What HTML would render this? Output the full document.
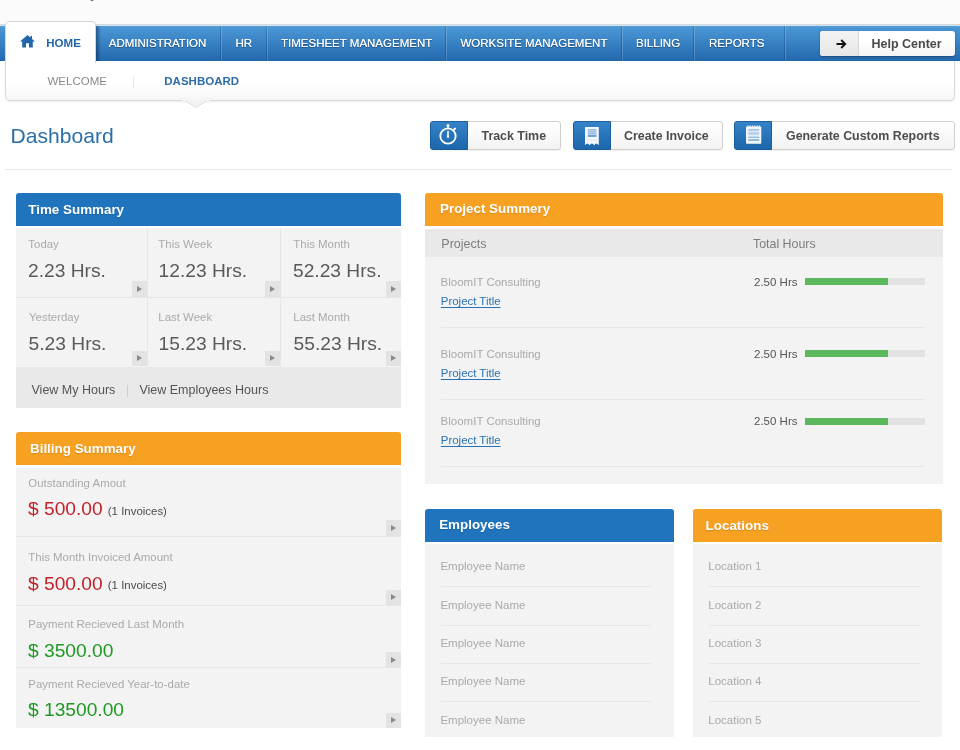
<!DOCTYPE html>
<html>
<head>
<meta charset="utf-8">
<title>Dashboard</title>
<style>
*{box-sizing:border-box;margin:0;padding:0}
html,body{width:960px;height:750px;overflow:hidden;background:#fff;font-family:"Liberation Sans",sans-serif;}
body{position:relative;color:#555;will-change:transform}
.abs{position:absolute}
.t{position:absolute;white-space:nowrap;line-height:1}
/* top strip */
#topbg{left:0;top:0;width:960px;height:26px;background:#fbfbfb}
/* nav */
#nav{left:0;top:24px;width:960px;height:37.2px;border-top:1px solid #d5d9dc;background:linear-gradient(#cde3f6 0,#cde3f6 1.1px,#5d9dd4 1.2px,#4a95d3 3px,#3a84c6 45%,#2268ad 100%);}
.nsep{position:absolute;top:26px;width:2px;height:35px;border-left:1px solid rgba(10,50,100,.28);border-right:1px solid rgba(255,255,255,.18)}
.nt{position:absolute;white-space:nowrap;line-height:1;top:37.6px;font-size:11.5px;color:#fff;text-shadow:0 1px 1px rgba(0,0,0,.4),0 0 .4px #fff}
#hometab{left:5px;top:21px;width:91px;height:42px;background:#fff;border:1px solid #d6d6d6;border-bottom:none;border-radius:5px 5px 0 0}
#tabsh{left:96px;top:26px;width:5px;height:35px;background:linear-gradient(90deg,rgba(0,20,60,.45),rgba(0,20,60,0))}
#subnav{left:5px;top:61.2px;width:950px;height:39.6px;background:linear-gradient(#fff 60%,#f6f6f6 100%);border:1px solid #d9d9d9;border-top:none;border-radius:0 0 5px 5px;box-shadow:0 1px 2px rgba(0,0,0,.08)}
/* buttons */
.btn{position:absolute;top:121.2px;height:28.6px;border:1px solid #cfcfcf;border-radius:3px;background:linear-gradient(#fff,#f3f3f3);box-shadow:0 1px 1px rgba(0,0,0,.06)}
.btn .ic{position:absolute;left:-1px;top:-1px;width:38px;height:28.6px;border-radius:3px 0 0 3px;background:linear-gradient(#3583c6,#1c66ab);border:1px solid #1b5f9f}
.bt{position:absolute;white-space:nowrap;line-height:1;top:129.6px;font-size:12.4px;font-weight:bold;color:#4d4d4d}
/* panels */
.hd{position:absolute;height:33.1px;border-radius:3px 3px 0 0}
.blue{background:#1f74bd}
.orange{background:#f7a123}
.ht{position:absolute;white-space:nowrap;line-height:1;font-size:13.4px;font-weight:bold;color:#fff;text-shadow:0 1px 1px rgba(0,0,0,.15)}
.cell{position:absolute;background:#f3f3f3}
.lbl{position:absolute;white-space:nowrap;line-height:1;font-size:11.45px;color:#aaa}
.big{position:absolute;white-space:nowrap;line-height:1;font-size:19.2px;color:#5a5a5a}
.arr{position:absolute;width:15px;height:15.5px;background:#e3e3e3}
.arr:after{content:"";position:absolute;left:5.3px;top:4.6px;border-left:5px solid #8a8a8a;border-top:3.1px solid transparent;border-bottom:3.1px solid transparent}
.ln{position:absolute;height:1px;background:#e6e6e6}
.vl{position:absolute;width:1px;background:#e6e6e6}
.red{color:#c0222a}
.green{color:#1d9a22}
.sm{position:absolute;white-space:nowrap;line-height:1;font-size:11.45px;color:#4a4a4a}
.row{position:absolute;white-space:nowrap;line-height:1;font-size:11.5px;color:#aaa}
.lnk{position:absolute;white-space:nowrap;line-height:1;font-size:11.45px;color:#2a72b5;text-decoration:underline;text-underline-offset:2.1px;text-decoration-skip-ink:none;text-decoration-thickness:1px}
.hrs{position:absolute;white-space:nowrap;line-height:1;font-size:11.5px;color:#555}
.pb{position:absolute;left:805.3px;width:120px;height:7px;background:#e2e2e2}
.pb i{display:block;width:82.5px;height:7px;background:#5cb85c}
</style>
</head>
<body>
<div class="abs" id="topbg"></div>
<div class="abs" style="left:90.4px;top:-1px;width:4px;height:2.2px;border-radius:0 0 2px 2px;background:#666"></div>
<div class="abs" id="nav"></div>

<div class="nsep" style="left:219.8px"></div>
<div class="nsep" style="left:265.8px"></div>
<div class="nsep" style="left:444.8px"></div>
<div class="nsep" style="left:620.8px"></div>
<div class="nsep" style="left:692.8px"></div>
<div class="nsep" style="left:783.8px"></div>
<div class="abs" id="subnav"></div>
<div class="abs" id="tabsh"></div>
<div class="abs" id="hometab"></div>
<svg class="abs" style="left:20px;top:35.2px" width="15" height="13" viewBox="0 0 15 13"><path d="M7.5 0 L0 6.6 H2.2 V12.6 H6 V8.2 H9 V12.6 H12.8 V6.6 H15 L12 3.9 V1 H10.4 V2.5 Z" fill="#2166ab"/></svg>
<div class="t" style="left:46.3px;top:38px;font-size:11.5px;font-weight:bold;color:#2166ab">HOME</div>
<div class="nt" style="left:108.8px">ADMINISTRATION</div>
<div class="nt" style="left:235.4px">HR</div>
<div class="nt" style="left:281px">TIMESHEET MANAGEMENT</div>
<div class="nt" style="left:460.5px">WORKSITE MANAGEMENT</div>
<div class="nt" style="left:636px">BILLING</div>
<div class="nt" style="left:709px">REPORTS</div>
<!-- help center -->
<div class="abs" style="left:820px;top:31px;width:135px;height:24.5px;border-radius:3px;background:linear-gradient(#fff 40%,#f4f4f4);box-shadow:0 1px 2px rgba(0,0,0,.35)"></div>
<div class="abs" style="left:820px;top:31px;width:38.5px;height:24.5px;border-radius:3px 0 0 3px;background:linear-gradient(#f3f3f3,#e6e6e6);border-right:1px solid #d6d6d6"></div>
<svg class="abs" style="left:835.5px;top:38.8px" width="11" height="10" viewBox="0 0 11 10"><path d="M0.5 5 H9 M5.2 1 L9.2 5 L5.2 9" stroke="#111" stroke-width="1.9" fill="none"/></svg>
<div class="t" style="left:871.5px;top:37.6px;font-size:12.5px;font-weight:bold;color:#4a4a4a">Help Center</div>
<!-- subnav text -->
<div class="t" style="left:47.5px;top:75.8px;font-size:11.5px;color:#8a8a8a">WELCOME</div>
<div class="abs" style="left:133px;top:76.5px;width:1px;height:11px;background:#e6e6e6"></div>
<div class="t" style="left:164.3px;top:75.8px;font-size:11.5px;font-weight:bold;color:#2d6ca6">DASHBOARD</div>
<!-- pointer -->
<svg class="abs" style="left:182px;top:100px" width="28" height="9" viewBox="0 0 28 9"><path d="M2.3 0 L14 7.4 L25.7 0 Z" fill="#f3f3f3" stroke="#dedede" stroke-width="1"/><rect x="0" y="0" width="28" height="1" fill="#f4f4f4"/></svg>
<!-- title -->
<div class="t" style="left:10.5px;top:124.7px;font-size:21.1px;color:#2a6ea8">Dashboard</div>
<div class="ln" style="left:5px;top:168.8px;width:947px;background:#e9e9e9"></div>


<div class="btn" style="left:429.5px;width:131px"><div class="ic"></div></div>
<div class="btn" style="left:572.5px;width:150px"><div class="ic"></div></div>
<div class="btn" style="left:734px;width:220.5px"><div class="ic"></div></div>
<svg class="abs" style="left:438.25px;top:122.5px" width="20" height="24" viewBox="0 0 20 24"><circle cx="10" cy="13" r="7.7" fill="none" stroke="#fff" stroke-width="1.8"/><rect x="8.6" y="1.3" width="2.8" height="2.5" rx="0.7" fill="#fff"/><rect x="9.35" y="3" width="1.3" height="2" fill="#fff"/><path d="M16.3 6.3 L17 5.7" stroke="#fff" stroke-width="2.1" stroke-linecap="round"/><path d="M10 7.4 L10.8 8.4 L10.8 12.6 L11.3 13.6 L10 15.6 L8.7 13.6 L9.2 12.6 L9.2 8.4 Z" fill="#fff"/></svg>
<svg class="abs" style="left:585.2px;top:126.75px" width="14" height="19" viewBox="0 0 14 19"><path d="M0 0 H13.8 V18.3 L12.6 17 Q11.5 16 10.4 17 L9.2 18.3 L8 17 Q6.9 16 5.8 17 L4.6 18.3 L3.4 17 Q2.3 16 1.2 17 L0 18.3 Z" fill="#f2f7fd"/><path d="M2.8 2.9 H11.5 M2.8 4.9 H11.5 M2.8 6.9 H11.5" stroke="#7fa9d6" stroke-width="1.2"/><path d="M2.8 9 H11.5" stroke="#4c86c2" stroke-width="1.5"/><path d="M2 13 H12" stroke="#c4d6ea" stroke-width="0.9" stroke-dasharray="1.2 0.8"/></svg>
<svg class="abs" style="left:745.8px;top:125.3px" width="16" height="19" viewBox="0 0 16 19"><rect x="0" y="1.6" width="15.3" height="17.1" rx="0.8" fill="#f2f7fd"/><path d="M1.9 0.4 V3 M4.2 0.4 V3 M6.5 0.4 V3 M8.8 0.4 V3 M11.1 0.4 V3 M13.4 0.4 V3" stroke="#f2f7fd" stroke-width="1.2"/><path d="M2.2 4.9 H13.2" stroke="#6d9fd2" stroke-width="1"/><rect x="2.2" y="6.4" width="11" height="4" fill="#c9dcf0"/><path d="M2.2 8.4 H13.2" stroke="#a8c5e6" stroke-width="0.9"/><path d="M2.2 12.2 H13.2" stroke="#6d9fd2" stroke-width="1"/><path d="M2.2 15 H13.2" stroke="#5a8fc8" stroke-width="1.2"/></svg>
<div class="bt" style="left:481.5px">Track Time</div>
<div class="bt" style="left:624px">Create Invoice</div>
<div class="bt" style="left:786px">Generate Custom Reports</div>


<!-- Time Summary -->
<div class="hd blue" style="left:16.3px;top:193px;width:384.7px"></div>
<div class="ht" style="left:28.3px;top:203px">Time Summary</div>
<div class="cell" style="left:16.3px;top:228.4px;width:384.7px;height:138.5px;background:linear-gradient(#f8f8f8,#f3f3f3 2.5px)"></div>
<div class="vl" style="left:147.2px;top:228.3px;height:138.6px"></div>
<div class="vl" style="left:280.4px;top:228.3px;height:138.6px"></div>
<div class="ln" style="left:16.3px;top:297px;width:384.7px"></div>
<div class="lbl" style="left:28.3px;top:239.3px">Today</div>
<div class="lbl" style="left:158.3px;top:239.3px">This Week</div>
<div class="lbl" style="left:293.3px;top:239.3px">This Month</div>
<div class="big" style="left:28px;top:261px">2.23 Hrs.</div>
<div class="big" style="left:158.6px;top:261px">12.23 Hrs.</div>
<div class="big" style="left:293px;top:261px">52.23 Hrs.</div>
<div class="arr" style="left:132px;top:281.3px"></div>
<div class="arr" style="left:265.2px;top:281.3px"></div>
<div class="arr" style="left:386px;top:281.3px"></div>
<div class="lbl" style="left:29px;top:312.3px">Yesterday</div>
<div class="lbl" style="left:158.3px;top:312.3px">Last Week</div>
<div class="lbl" style="left:293.3px;top:312.3px">Last Month</div>
<div class="big" style="left:28.6px;top:333.6px">5.23 Hrs.</div>
<div class="big" style="left:158.6px;top:333.6px">15.23 Hrs.</div>
<div class="big" style="left:293.6px;top:333.6px">55.23 Hrs.</div>
<div class="arr" style="left:132px;top:350.8px"></div>
<div class="arr" style="left:265.2px;top:350.8px"></div>
<div class="arr" style="left:386px;top:350.8px"></div>
<div class="abs" style="left:16.3px;top:366.9px;width:384.7px;height:41px;background:#e9e9e9"></div>
<div class="t" style="left:31.5px;top:383.7px;font-size:12.5px;color:#555">View My Hours</div>
<div class="abs" style="left:127.3px;top:384.5px;width:1px;height:12px;background:#cfcfcf"></div>
<div class="t" style="left:139.4px;top:383.7px;font-size:12.5px;color:#555">View Employees Hours</div>
<!-- Billing Summary -->
<div class="hd orange" style="left:16.3px;top:432.1px;width:384.7px"></div>
<div class="ht" style="left:30px;top:441.8px">Billing Summary</div>
<div class="cell" style="left:16.3px;top:467.5px;width:384.7px;height:260.9px"></div>
<div class="ln" style="left:16.3px;top:536.3px;width:384.7px"></div>
<div class="ln" style="left:16.3px;top:605px;width:384.7px"></div>
<div class="ln" style="left:16.3px;top:667.3px;width:384.7px"></div>
<div class="lbl" style="left:28.3px;top:478px">Outstanding Amout</div>
<div class="big red" style="left:28px;top:499.3px">$ 500.00</div>
<div class="sm" style="left:107.8px;top:506.2px">(1 Invoices)</div>
<div class="arr" style="left:386px;top:520.3px;height:16px"></div>
<div class="lbl" style="left:28.3px;top:552.3px">This Month Invoiced Amount</div>
<div class="big red" style="left:28px;top:573.7px">$ 500.00</div>
<div class="sm" style="left:107.8px;top:580.4px">(1 Invoices)</div>
<div class="arr" style="left:386px;top:589.5px"></div>
<div class="lbl" style="left:28.3px;top:619.2px">Payment Recieved Last Month</div>
<div class="big green" style="left:28px;top:640.5px">$ 3500.00</div>
<div class="arr" style="left:386px;top:652.3px"></div>
<div class="lbl" style="left:28.3px;top:678.8px">Payment Recieved Year-to-date</div>
<div class="big green" style="left:28px;top:699.9px">$ 13500.00</div>
<div class="arr" style="left:386px;top:712.8px"></div>


<!-- Project Summary -->
<div class="hd orange" style="left:425.4px;top:193px;width:517.4px"></div>
<div class="ht" style="left:440px;top:201.8px">Project Summery</div>
<div class="cell" style="left:425.4px;top:229.2px;width:517.4px;height:254.6px"></div>
<div class="abs" style="left:425.4px;top:229.2px;width:517.4px;height:27.8px;background:#e9e9e9"></div>
<div class="t" style="left:441.3px;top:238.3px;font-size:12.5px;color:#7d7d7d">Projects</div>
<div class="t" style="left:753px;top:238.3px;font-size:12.4px;color:#7d7d7d">Total Hours</div>
<div class="row" style="left:440.6px;top:276.6px">BloomIT Consulting</div>
<div class="lnk" style="left:440.8px;top:295.6px">Project Title</div>
<div class="hrs" style="left:754px;top:276.6px">2.50 Hrs</div>
<div class="pb" style="top:278.3px"><i></i></div>
<div class="ln" style="left:441px;top:326.8px;width:484px"></div>
<div class="row" style="left:440.6px;top:348.6px">BloomIT Consulting</div>
<div class="lnk" style="left:440.8px;top:367.6px">Project Title</div>
<div class="hrs" style="left:754px;top:348.6px">2.50 Hrs</div>
<div class="pb" style="top:350.3px"><i></i></div>
<div class="ln" style="left:441px;top:399.3px;width:484px"></div>
<div class="row" style="left:440.6px;top:415.8px">BloomIT Consulting</div>
<div class="lnk" style="left:440.8px;top:434.8px">Project Title</div>
<div class="hrs" style="left:754px;top:415.8px">2.50 Hrs</div>
<div class="pb" style="top:417.5px"><i></i></div>
<div class="ln" style="left:441px;top:466.4px;width:484px"></div>
<!-- Employees -->
<div class="hd blue" style="left:425.2px;top:509px;width:248.8px"></div>
<div class="ht" style="left:439.2px;top:517.9px">Employees</div>
<div class="cell" style="left:425.2px;top:544.3px;width:248.8px;height:192.4px"></div>
<div class="row" style="left:440.4px;top:561.2px">Employee Name</div>
<div class="ln" style="left:441px;top:585.8px;width:210px"></div>
<div class="row" style="left:440.4px;top:599.6px">Employee Name</div>
<div class="ln" style="left:441px;top:624.6px;width:210px"></div>
<div class="row" style="left:440.4px;top:638.0px">Employee Name</div>
<div class="ln" style="left:441px;top:663px;width:210px"></div>
<div class="row" style="left:440.4px;top:676.4px">Employee Name</div>
<div class="ln" style="left:441px;top:701.2px;width:210px"></div>
<div class="row" style="left:440.4px;top:714.8px">Employee Name</div>
<!-- Locations -->
<div class="hd orange" style="left:693px;top:509px;width:249.2px"></div>
<div class="ht" style="left:705.6px;top:518.6px">Locations</div>
<div class="cell" style="left:693px;top:544.3px;width:249.2px;height:192.4px"></div>
<div class="row" style="left:708.3px;top:561.2px">Location 1</div>
<div class="ln" style="left:708.7px;top:585.8px;width:212px"></div>
<div class="row" style="left:708.3px;top:599.6px">Location 2</div>
<div class="ln" style="left:708.7px;top:624.6px;width:212px"></div>
<div class="row" style="left:708.3px;top:638.0px">Location 3</div>
<div class="ln" style="left:708.7px;top:663px;width:212px"></div>
<div class="row" style="left:708.3px;top:676.4px">Location 4</div>
<div class="ln" style="left:708.7px;top:701.2px;width:212px"></div>
<div class="row" style="left:708.3px;top:714.8px">Location 5</div>

</body>
</html>
